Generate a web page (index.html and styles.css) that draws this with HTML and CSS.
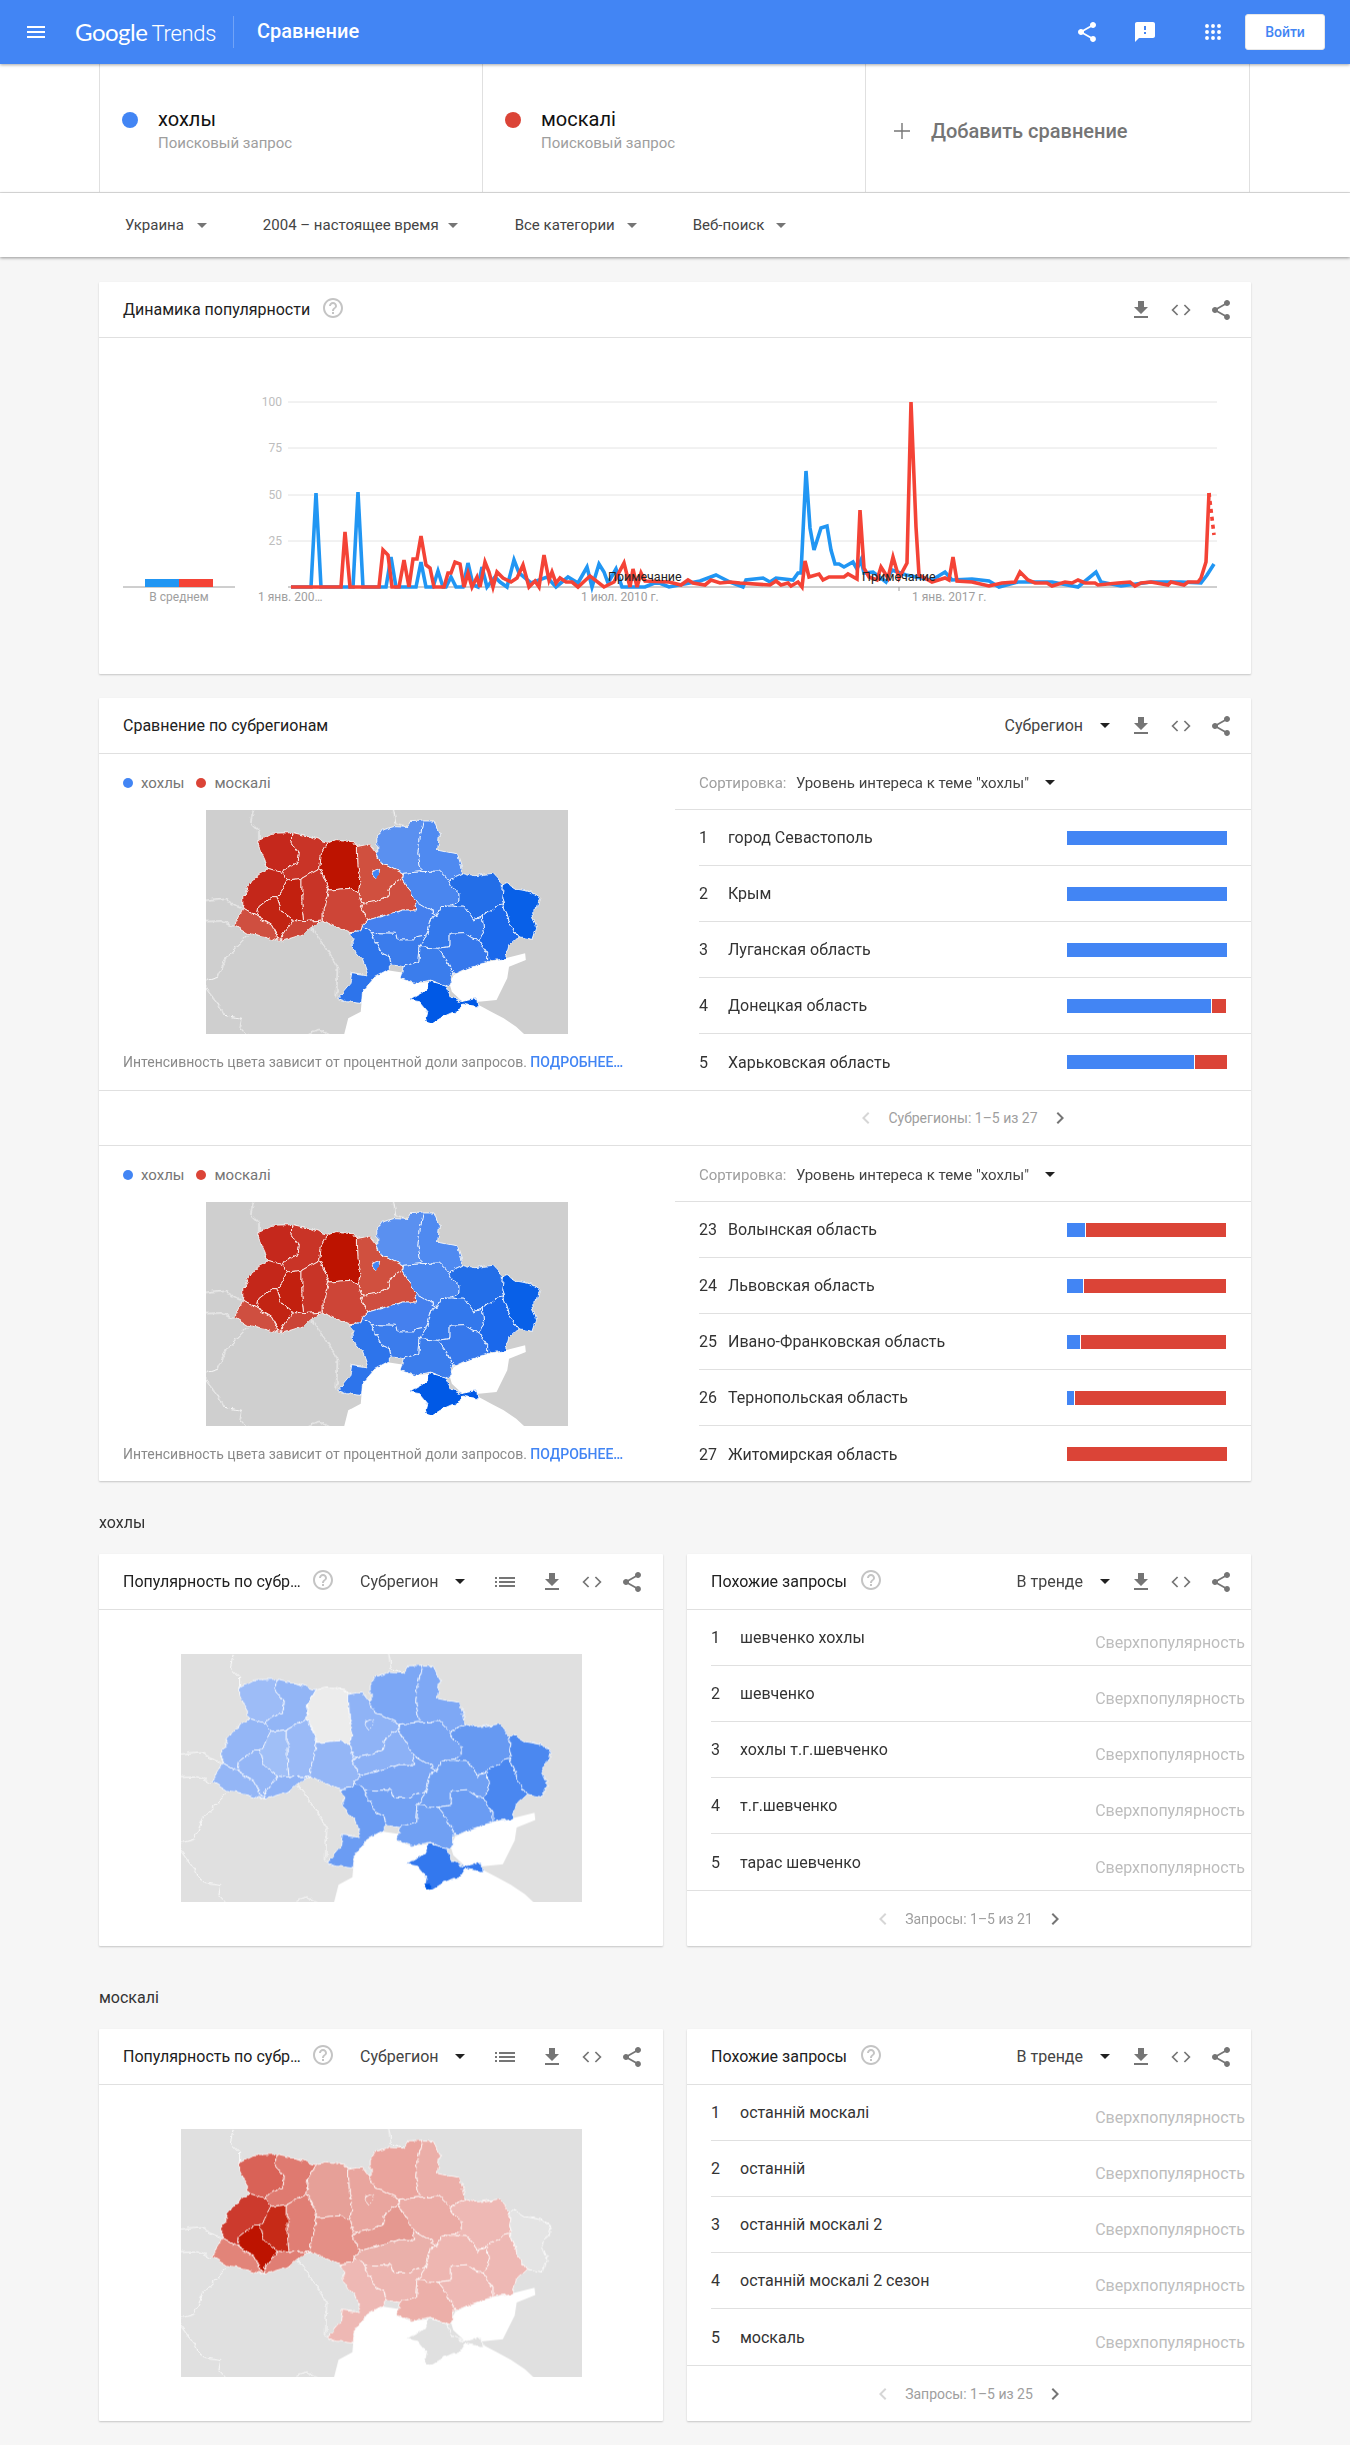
FILE: index.html
```html
<!DOCTYPE html>
<html lang="ru">
<head>
<meta charset="utf-8">
<title>Сравнение - Google Trends</title>
<link rel="stylesheet" href="styles.css">
</head>
<body>
<svg class="defs" xmlns="http://www.w3.org/2000/svg">
  <filter id="wob" x="-5%" y="-5%" width="110%" height="110%" color-interpolation-filters="sRGB">
    <feTurbulence type="fractalNoise" baseFrequency="0.045" numOctaves="3" seed="4" result="n"/>
    <feDisplacementMap in="SourceGraphic" in2="n" scale="16" xChannelSelector="R" yChannelSelector="G"/>
  </filter>
  <symbol id="i-share" viewBox="0 0 24 24"><path d="M18 16.08c-.76 0-1.44.3-1.96.77L8.91 12.7c.05-.23.09-.46.09-.7s-.04-.47-.09-.7l7.05-4.11c.54.5 1.25.81 2.04.81 1.66 0 3-1.34 3-3s-1.34-3-3-3-3 1.34-3 3c0 .24.04.47.09.7L8.04 9.81C7.5 9.31 6.79 9 6 9c-1.66 0-3 1.34-3 3s1.34 3 3 3c.79 0 1.5-.31 2.04-.81l7.12 4.16c-.05.21-.08.43-.08.65 0 1.61 1.31 2.92 2.92 2.92 1.61 0 2.92-1.31 2.92-2.92s-1.31-2.92-2.92-2.92z"/></symbol>
  <symbol id="i-download" viewBox="0 0 24 24"><path d="M19 9h-4V3H9v6H5l7 7 7-7zM5 18v2h14v-2H5z"/></symbol>
  <symbol id="i-code" viewBox="0 0 24 24"><path d="M8.6 7 3.6 12l5 5M15.4 7l5 5-5 5" fill="none" stroke="currentColor" stroke-width="1.7"/></symbol>
  <symbol id="i-list" viewBox="0 0 24 24"><path d="M2 13h2v-2H2v2zm0 4h2v-2H2v2zm0-8h2V7H2v2zm4 4h16v-2H6v2zm0 4h16v-2H6v2zM6 7v2h16V7H6z"/></symbol>
  <symbol id="i-help" viewBox="0 0 24 24"><path d="M11 18h2v-2h-2v2zm1-16C6.48 2 2 6.48 2 12s4.48 10 10 10 10-4.48 10-10S17.52 2 12 2zm0 18c-4.41 0-8-3.59-8-8s3.59-8 8-8 8 3.59 8 8-3.59 8-8 8zm0-14c-2.21 0-4 1.79-4 4h2c0-1.1.9-2 2-2s2 .9 2 2c0 2-3 1.75-3 5h2c0-2.25 3-2.5 3-5 0-2.21-1.79-4-4-4z"/></symbol>
  <symbol id="i-prev" viewBox="0 0 24 24"><path d="M15.41 7.41L14 6l-6 6 6 6 1.41-1.41L10.83 12z"/></symbol>
  <symbol id="i-next" viewBox="0 0 24 24"><path d="M10 6L8.59 7.41 13.17 12l-4.58 4.59L10 18l6-6z"/></symbol>
  <symbol id="ukr" viewBox="297 360 1013 672" preserveAspectRatio="none">
    <g class="borders" filter="url(#wob)">
      <polyline points="432,350 422,395 445,420 445,450"/>
      <polyline points="820,350 828,400 860,410"/>
      <polyline points="590,710 632,775 665,830 662,920"/>
      <polyline points="412,738 355,800 330,862 290,875"/>
      <polyline points="290,632 345,625 395,655"/>
      <polyline points="290,695 340,693 375,710"/>
      <polyline points="290,885 335,950 345,975 395,985 390,1010 415,1040"/>
      <polyline points="565,1040 610,1018 650,1040"/>
    </g>
    <polygon class="sea" points="682,1040 695,985 730,965 735,905 770,860 800,840 860,850 840,865 880,880 925,875 960,900 1000,960 1015,940 1060,945 1095,965 1130,985 1165,1010 1195,1040"/>
    <polygon class="sea" points="978,880 990,855 1030,835 1085,815 1135,805 1190,790 1192,810 1145,830 1140,865 1110,930 1060,935 1015,935 985,905"/>
    <g class="regions" filter="url(#wob)">
      <polygon class="r-volyn" points="445,450 480,430 540,428 538,460 558,490 555,518 515,535 512,548 470,535 462,510 445,470"/>
      <polygon class="r-rivne" points="540,428 590,440 637,458 620,490 615,535 565,565 525,570 512,548 515,535 555,518 558,490 538,460"/>
      <polygon class="r-zhyt" points="637,458 665,452 708,455 718,470 718,490 720,530 730,575 722,610 700,595 640,600 630,570 615,535 620,490"/>
      <polygon class="r-kyiv" points="718,470 755,462 775,490 785,520 805,525 850,550 848,565 812,590 805,620 770,635 735,640 722,610 730,575 720,530 718,490"/>
      <polygon class="r-city" points="760,540 772,543 786,538 784,552 772,565 763,552"/>
      <polygon class="r-cher" points="735,640 770,635 805,620 812,590 848,565 865,595 880,632 885,660 850,660 800,675 750,690 730,655"/>
      <polygon class="r-chern" points="775,445 790,420 825,410 860,412 868,395 905,393 897,440 890,490 900,545 850,550 805,525 785,520 775,490"/>
      <polygon class="r-sumy" points="905,393 935,393 950,435 945,480 1000,492 1012,530 1015,550 975,570 950,543 900,545 890,490 897,440"/>
      <polygon class="r-polt" points="850,550 900,545 950,543 975,570 985,590 1005,610 1005,630 985,648 955,650 945,675 905,648 880,632 865,595 848,565"/>
      <polygon class="r-khar" points="975,570 1015,550 1040,558 1100,550 1130,585 1125,620 1130,645 1105,650 1070,680 1045,690 1020,652 985,648 1005,630 1005,610 985,590"/>
      <polygon class="r-luh" points="1130,585 1140,578 1170,598 1205,605 1232,620 1225,650 1208,665 1222,715 1212,748 1170,740 1148,705 1130,645 1125,620"/>
      <polygon class="r-don" points="1070,680 1105,650 1130,645 1148,705 1170,740 1145,765 1135,805 1085,815 1085,790 1060,750 1075,725"/>
      <polygon class="r-dnip" points="955,650 985,648 1020,652 1045,690 1070,680 1075,725 1060,750 1035,740 1020,728 980,730 980,770 945,775 893,770 915,735 930,680 945,675"/>
      <polygon class="r-zap" points="980,730 1020,728 1035,740 1060,750 1085,790 1085,815 1030,835 990,855 970,810 945,775 980,770"/>
      <polygon class="r-kiro" points="735,705 750,690 800,675 850,660 885,660 880,632 905,648 945,675 930,680 915,735 890,740 880,750 835,750 830,730 760,728"/>
      <polygon class="r-myk" points="760,728 830,730 835,750 880,750 890,740 915,735 893,770 890,815 850,830 815,825 810,800 790,790 770,750"/>
      <polygon class="r-khers" points="893,770 945,775 970,810 990,855 978,880 975,890 925,870 880,880 840,865 850,830 890,815"/>
      <polygon class="r-odes" points="695,728 730,725 735,705 760,728 770,750 790,790 810,800 815,825 805,840 770,860 735,905 732,940 690,935 665,925 700,880 705,848 750,855 735,810 710,780 708,745"/>
      <polygon class="r-crim" points="868,930 900,910 920,890 920,872 965,885 985,925 1010,935 1055,925 1058,950 1015,942 1003,965 985,968 950,985 930,998 912,990 918,965 895,935"/>
      <polygon class="r-seva" points="912,985 925,982 932,998 914,992"/>
      <polygon class="r-khme" points="565,565 615,535 630,570 640,600 625,660 625,690 570,695 565,640"/>
      <polygon class="r-vinn" points="640,600 700,595 722,610 735,640 730,655 750,690 735,705 730,725 695,728 640,700 625,690 625,660"/>
      <polygon class="r-tern" points="525,570 565,565 565,640 570,695 540,688 510,665 495,620 510,600"/>
      <polygon class="r-lviv" points="470,535 512,548 525,570 510,600 495,620 480,620 445,650 440,680 400,655 400,620 430,565"/>
      <polygon class="r-ivan" points="480,620 495,620 510,665 540,688 510,735 505,755 480,705 440,680 445,650"/>
      <polygon class="r-zak" points="400,655 440,680 480,705 505,755 465,740 415,730 378,705"/>
      <polygon class="r-cvts" points="540,688 570,695 625,690 590,710 565,735 505,755 510,735"/>
    </g>
  </symbol>
</svg>

<header class="topbar">
  <svg class="ic-24 menu" viewBox="0 0 24 24"><path d="M3 18h18v-2H3v2zm0-5h18v-2H3v2zm0-7v2h18V6H3z"/></svg>
  <div class="logo"><span class="logo-g">Google</span> <span class="logo-t">Trends</span></div>
  <div class="top-title">Сравнение</div>
  <div class="top-actions">
    <svg class="ic-24"><use href="#i-share"/></svg>
    <svg class="ic-24 feedback" viewBox="0 0 24 24"><path d="M20 2H4c-1.1 0-1.99.9-1.99 2L2 22l4-4h14c1.1 0 2-.9 2-2V4c0-1.1-.9-2-2-2zm-7 12h-2v-2h2v2zm0-4h-2V6h2v4z"/></svg>
    <svg class="ic-24 apps" viewBox="0 0 24 24"><circle cx="4" cy="4" r="2.6"/><circle cx="12" cy="4" r="2.6"/><circle cx="20" cy="4" r="2.6"/><circle cx="4" cy="12" r="2.6"/><circle cx="12" cy="12" r="2.6"/><circle cx="20" cy="12" r="2.6"/><circle cx="4" cy="20" r="2.6"/><circle cx="12" cy="20" r="2.6"/><circle cx="20" cy="20" r="2.6"/></svg>
    <button class="signin">Войти</button>
  </div>
</header>

<section class="terms">
  <div class="term"><span class="dot dot-blue"></span><div><div class="term-name">хохлы</div><div class="term-kind">Поисковый запрос</div></div></div>
  <div class="term"><span class="dot dot-red"></span><div><div class="term-name">москалі</div><div class="term-kind">Поисковый запрос</div></div></div>
  <div class="term term-add"><svg class="plus" viewBox="0 0 16 16"><path d="M8 0v16M0 8h16"/></svg><span>Добавить сравнение</span></div>
</section>

<nav class="filters">
  <div class="filter f1">Украина<i class="caret"></i></div>
  <div class="filter f2">2004 – настоящее время<i class="caret"></i></div>
  <div class="filter f3">Все категории<i class="caret"></i></div>
  <div class="filter f4">Веб-поиск<i class="caret"></i></div>
</nav>

<main class="page">
  <article class="card card-trend">
    <div class="card-head">
      <h2 class="card-title">Динамика популярности</h2>
      <svg class="ic-24 help"><use href="#i-help"/></svg>
      <div class="actions">
        <svg class="ic-24"><use href="#i-download"/></svg><svg class="ic-24"><use href="#i-code"/></svg><svg class="ic-24"><use href="#i-share"/></svg>
      </div>
    </div>
    <svg class="chart" viewBox="99 338 1152 336">
      <g class="grid"><line x1="288" x2="1217" y1="402" y2="402"/><line x1="288" x2="1217" y1="448" y2="448"/><line x1="288" x2="1217" y1="495" y2="495"/><line x1="288" x2="1217" y1="541" y2="541"/></g>
      <line class="axis" x1="288" x2="1217" y1="587" y2="587"/>
      <line class="axis" x1="123" x2="235" y1="587" y2="587"/>
      <line class="axis" x1="899" x2="899" y1="587" y2="591"/>
      <rect class="avg-blue" x="145" y="579" width="34" height="8"/>
      <rect class="avg-red" x="179" y="579" width="34" height="8"/>
      <g class="tick-y"><text x="282" y="406">100</text><text x="282" y="452">75</text><text x="282" y="499">50</text><text x="282" y="545">25</text></g>
      <g class="tick-x"><text x="179" y="601" text-anchor="middle">В среднем</text><text x="258" y="601">1 янв. 200…</text><text x="581" y="601">1 июл. 2010 г.</text><text x="912" y="601">1 янв. 2017 г.</text></g>
      <polyline class="line-blue" points="291,587 311,587 316,493 321,587 353,587 358,492 363,587 386,587 391,557 396,587 416,587 421,562 426,587 433,587 438,571 443,587 446,587 451,577 456,587 463,587 468,563 473,585 478,587 482,567 487,587 495,577 500,582 507,587 514,560 519,573 531,583 547,577 556,587 568,577 578,583 587,567 592,587 599,564 604,572 608,583 616,569 622,587 645,587 657,582 669,587 700,581 716,575 720,577 730,582 743,587 746,580 763,578 770,582 776,578 793,580 798,573 801,573 806,471 810,528 814,550 821,528 827,526 831,550 835,564 839,564 844,567 853,562 857,569 861,560 864,573 873,572 886,582 892,570 906,575 932,580 945,572 952,580 972,579 989,581 999,587 1018,582 1052,582 1078,587 1096,572 1101,582 1121,586 1151,582 1181,582 1201,583 1207,575 1214,564"/>
      <polyline class="line-red" points="291,587 341,587 345,532 350,587 379,587 383,550 388,555 392,587 399,587 404,560 409,587 413,559 417,559 421,536 426,565 430,568 434,587 444,587 448,573 451,573 455,562 460,564 464,587 468,573 472,587 477,577 480,587 485,562 489,572 493,587 497,572 503,578 511,582 517,578 523,565 529,587 535,581 539,587 544,555 549,580 552,572 556,583 560,578 566,582 572,582 578,587 590,576 604,587 614,582 624,563 630,587 633,569 637,587 641,573 645,581 669,582 681,585 688,580 693,583 705,585 711,580 720,583 730,582 740,583 770,585 776,581 781,585 788,583 791,586 798,582 802,587 805,561 809,577 819,574 823,580 829,577 844,577 848,574 857,579 860,510 864,568 869,577 877,580 881,567 888,578 893,557 899,578 907,563 911,402 916,527 919,575 932,582 945,578 949,580 953,557 957,581 972,582 989,586 1002,583 1015,582 1020,572 1028,580 1035,583 1047,583 1052,586 1065,582 1072,583 1078,580 1085,583 1095,583 1098,585 1118,583 1130,582 1135,586 1141,583 1151,582 1168,585 1171,582 1184,585 1188,582 1198,582 1201,578 1206,562 1209,493"/>
      <polyline class="line-red dotted" points="1209,493 1214,535"/>
      <g class="note"><text x="608" y="581">Примечание</text><text x="862" y="581">Примечание</text></g>
    </svg>
  </article>

  <article class="card card-compare">
    <div class="card-head">
      <h2 class="card-title">Сравнение по субрегионам</h2>
      <div class="select sel-region">Субрегион<i class="caret caret-dark"></i></div>
      <div class="actions actions-tight">
        <svg class="ic-24"><use href="#i-download"/></svg><svg class="ic-24"><use href="#i-code"/></svg><svg class="ic-24"><use href="#i-share"/></svg>
      </div>
    </div>
    <div class="split">
      <div class="split-map">
        <div class="legend"><span class="dot-s dot-blue"></span>хохлы<span class="dot-s dot-red second"></span>москалі</div>
        <svg class="map map-small map-dark map-duo"><use href="#ukr"/></svg>
        <p class="caption">Интенсивность цвета зависит от процентной доли запросов. <a class="more">ПОДРОБНЕЕ…</a></p>
      </div>
      <div class="split-list">
        <div class="sort"><span class="sort-k">Сортировка:</span><span class="sort-v">Уровень интереса к теме "хохлы"</span><i class="caret caret-dark"></i></div>
        <div class="row"><span class="num">1</span><span class="name">город Севастополь</span><span class="bar"><b class="blue w-100"></b></span></div>
        <div class="row"><span class="num">2</span><span class="name">Крым</span><span class="bar"><b class="blue w-100"></b></span></div>
        <div class="row"><span class="num">3</span><span class="name">Луганская область</span><span class="bar"><b class="blue w-100"></b></span></div>
        <div class="row"><span class="num">4</span><span class="name">Донецкая область</span><span class="bar"><b class="blue" style="width:144px"></b><b class="red" style="width:14px"></b></span></div>
        <div class="row row-last"><span class="num">5</span><span class="name">Харьковская область</span><span class="bar"><b class="blue" style="width:127px"></b><b class="red" style="width:32px"></b></span></div>
      </div>
    </div>
    <div class="pager pager-line pager-right"><svg class="ic-18 off"><use href="#i-prev"/></svg><span class="pager-text">Субрегионы: 1–5 из 27</span><svg class="ic-18"><use href="#i-next"/></svg></div>
    <div class="split">
      <div class="split-map">
        <div class="legend"><span class="dot-s dot-blue"></span>хохлы<span class="dot-s dot-red second"></span>москалі</div>
        <svg class="map map-small map-dark map-duo"><use href="#ukr"/></svg>
        <p class="caption">Интенсивность цвета зависит от процентной доли запросов. <a class="more">ПОДРОБНЕЕ…</a></p>
      </div>
      <div class="split-list">
        <div class="sort"><span class="sort-k">Сортировка:</span><span class="sort-v">Уровень интереса к теме "хохлы"</span><i class="caret caret-dark"></i></div>
        <div class="row"><span class="num">23</span><span class="name">Волынская область</span><span class="bar"><b class="blue" style="width:18px"></b><b class="red" style="width:140px"></b></span></div>
        <div class="row"><span class="num">24</span><span class="name">Львовская область</span><span class="bar"><b class="blue" style="width:16px"></b><b class="red" style="width:142px"></b></span></div>
        <div class="row"><span class="num">25</span><span class="name">Ивано-Франковская область</span><span class="bar"><b class="blue" style="width:13px"></b><b class="red" style="width:145px"></b></span></div>
        <div class="row"><span class="num">26</span><span class="name">Тернопольская область</span><span class="bar"><b class="blue" style="width:7px"></b><b class="red" style="width:151px"></b></span></div>
        <div class="row row-end"><span class="num">27</span><span class="name">Житомирская область</span><span class="bar"><b class="red w-100"></b></span></div>
      </div>
    </div>
  </article>

  <h3 class="term-title">хохлы</h3>
  <div class="pair">
    <article class="card">
      <div class="card-head">
        <h2 class="card-title short">Популярность по субр…</h2>
        <svg class="ic-24 help help-near"><use href="#i-help"/></svg>
        <div class="select sel-map">Субрегион<i class="caret caret-dark"></i></div>
        <svg class="ic-24 list"><use href="#i-list"/></svg>
        <div class="actions actions-tight">
          <svg class="ic-24"><use href="#i-download"/></svg><svg class="ic-24"><use href="#i-code"/></svg><svg class="ic-24"><use href="#i-share"/></svg>
        </div>
      </div>
      <div class="map-body"><svg class="map map-big map-light map-blue"><use href="#ukr"/></svg></div>
    </article>
    <article class="card">
      <div class="card-head">
        <h2 class="card-title">Похожие запросы</h2>
        <svg class="ic-24 help help-near2"><use href="#i-help"/></svg>
        <div class="select sel-trend">В тренде<i class="caret caret-dark"></i></div>
        <div class="actions actions-tight">
          <svg class="ic-24"><use href="#i-download"/></svg><svg class="ic-24"><use href="#i-code"/></svg><svg class="ic-24"><use href="#i-share"/></svg>
        </div>
      </div>
      <div class="row q"><span class="num">1</span><span class="name">шевченко хохлы</span><span class="hot">Сверхпопулярность</span></div>
      <div class="row q"><span class="num">2</span><span class="name">шевченко</span><span class="hot">Сверхпопулярность</span></div>
      <div class="row q"><span class="num">3</span><span class="name">хохлы т.г.шевченко</span><span class="hot">Сверхпопулярность</span></div>
      <div class="row q"><span class="num">4</span><span class="name">т.г.шевченко</span><span class="hot">Сверхпопулярность</span></div>
      <div class="row q row-last"><span class="num">5</span><span class="name">тарас шевченко</span><span class="hot">Сверхпопулярность</span></div>
      <div class="pager"><svg class="ic-18 off"><use href="#i-prev"/></svg><span class="pager-text">Запросы: 1–5 из 21</span><svg class="ic-18"><use href="#i-next"/></svg></div>
    </article>
  </div>

  <h3 class="term-title term-title-2">москалі</h3>
  <div class="pair">
    <article class="card">
      <div class="card-head">
        <h2 class="card-title short">Популярность по субр…</h2>
        <svg class="ic-24 help help-near"><use href="#i-help"/></svg>
        <div class="select sel-map">Субрегион<i class="caret caret-dark"></i></div>
        <svg class="ic-24 list"><use href="#i-list"/></svg>
        <div class="actions actions-tight">
          <svg class="ic-24"><use href="#i-download"/></svg><svg class="ic-24"><use href="#i-code"/></svg><svg class="ic-24"><use href="#i-share"/></svg>
        </div>
      </div>
      <div class="map-body"><svg class="map map-big map-light map-red"><use href="#ukr"/></svg></div>
    </article>
    <article class="card">
      <div class="card-head">
        <h2 class="card-title">Похожие запросы</h2>
        <svg class="ic-24 help help-near2"><use href="#i-help"/></svg>
        <div class="select sel-trend">В тренде<i class="caret caret-dark"></i></div>
        <div class="actions actions-tight">
          <svg class="ic-24"><use href="#i-download"/></svg><svg class="ic-24"><use href="#i-code"/></svg><svg class="ic-24"><use href="#i-share"/></svg>
        </div>
      </div>
      <div class="row q"><span class="num">1</span><span class="name">останній москалі</span><span class="hot">Сверхпопулярность</span></div>
      <div class="row q"><span class="num">2</span><span class="name">останній</span><span class="hot">Сверхпопулярность</span></div>
      <div class="row q"><span class="num">3</span><span class="name">останній москалі 2</span><span class="hot">Сверхпопулярность</span></div>
      <div class="row q"><span class="num">4</span><span class="name">останній москалі 2 сезон</span><span class="hot">Сверхпопулярность</span></div>
      <div class="row q row-last"><span class="num">5</span><span class="name">москаль</span><span class="hot">Сверхпопулярность</span></div>
      <div class="pager"><svg class="ic-18 off"><use href="#i-prev"/></svg><span class="pager-text">Запросы: 1–5 из 25</span><svg class="ic-18"><use href="#i-next"/></svg></div>
    </article>
  </div>
</main>
</body>
</html>
```

FILE: styles.css
```css
* { box-sizing: border-box; }
html, body { margin: 0; padding: 0; }
body { background: #f6f6f6; font-family: Roboto, "Noto Sans", sans-serif; color: #333; height: 2445px; overflow: hidden; }
.defs { position: absolute; width: 0; height: 0; overflow: hidden; }
h2, h3, p { margin: 0; font-weight: 400; }

.ic-24 { width: 24px; height: 24px; fill: #757575; color: #757575; flex: none; display: block; }
.ic-18 { width: 24px; height: 24px; fill: #757575; flex: none; }
.ic-18.off { fill: #d6d6d6; }

/* top bar */
.topbar { height: 64px; background: #4285f4; display: flex; align-items: center; position: relative; z-index: 2; box-shadow: 0 1px 3px rgba(0,0,0,.35); color: #fff; padding-left: 24px; }
.topbar .ic-24 { fill: #fff; color: #fff; }
.logo { margin-left: 27px; width: 159px; height: 32px; line-height: 32px; border-right: 1px solid rgba(255,255,255,.25); white-space: nowrap; font-family: Lato, sans-serif; font-size: 24px; }
.logo-g { font-weight: 400; letter-spacing: -.5px; }
.logo-t { font-family: Roboto, sans-serif; font-weight: 300; font-size: 22px; letter-spacing: -.3px; margin-left: -2px; }
.top-title { margin-left: 23px; margin-top: -2px; font-size: 20px; font-weight: 500; }
.top-actions { margin-left: auto; display: flex; align-items: center; padding-right: 25px; }
.feedback { margin-left: 34px; }
.topbar .apps { margin-left: 47px; width: 18px; height: 18px; }
.signin { margin-left: 23px; width: 80px; height: 36px; background: #fff; color: #4285f4; border: 1px solid #e8e8e8; border-radius: 3px; font: 500 14px Roboto, sans-serif; }

/* terms */
.terms { height: 129px; background: #fff; display: flex; padding-left: 99px; border-bottom: 1px solid #e0e0e0; }
.term { width: 383px; border-left: 1px solid #e0e0e0; display: flex; align-items: center; padding-left: 22px; padding-top: 3px; }
.term-add { border-right: 1px solid #e0e0e0; width: 385px; padding-left: 28px; padding-top: 6px; font-size: 20px; font-weight: 500; color: #757575; }
.plus { width: 16px; height: 16px; fill: none; stroke: #757575; stroke-width: 1.4; margin-right: 21px; }
.dot { width: 16px; height: 16px; border-radius: 50%; margin-right: 20px; margin-top: -20px; flex: none; }
.dot-blue { background: #4285f4; }
.dot-red { background: #db4437; }
.term-name { font-size: 20px; line-height: 24px; color: #111; }
.term-kind { font-size: 15px; line-height: 20px; color: #9e9e9e; margin-top: 2px; }

/* filters */
.filters { height: 64px; background: #fff; display: flex; align-items: center; box-shadow: 0 1px 3px rgba(0,0,0,.4); position: relative; font-size: 15px; color: #444; }
.filter { display: flex; align-items: center; white-space: nowrap; }
.f1 { margin-left: 125px; }
.f1 .caret { margin-left: 13px; }
.f2 { margin-left: 56px; }
.f2 .caret { margin-left: 9px; }
.f3 { margin-left: 57px; }
.f4 { margin-left: 56px; }
.caret { display: block; width: 0; height: 0; border-left: 5px solid transparent; border-right: 5px solid transparent; border-top: 5px solid #757575; margin-left: 12px; }
.caret-dark { border-top-color: #212121; }

/* page + cards */
.page { width: 1152px; margin-left: 99px; padding-top: 25px; }
.card { background: #fff; box-shadow: 0 1px 2px rgba(0,0,0,.2); border-radius: 1px; }
.card-trend { height: 392px; margin-bottom: 24px; }
.card-head { height: 56px; border-bottom: 1px solid #e0e0e0; display: flex; align-items: center; padding-left: 24px; padding-right: 18px; }
.card-title { font-size: 16px; color: #212121; white-space: nowrap; }
.help { width: 24px; height: 24px; fill: #c4c4c4; margin-left: 11px; margin-top: -3px; }
.actions { margin-left: auto; display: flex; gap: 16px; align-items: center; }
.actions-tight { margin-left: 0; }
.select { font-size: 16px; color: #444; display: flex; align-items: center; margin-left: auto; margin-right: 19px; white-space: nowrap; }
.select .caret { margin-left: 17px; }
.chart { width: 1152px; height: 336px; display: block; }
.grid line { stroke: #e4e4e4; stroke-width: 1; }
.axis { stroke: #9e9e9e; stroke-width: 1; }
.avg-blue { fill: #2196f3; }
.avg-red { fill: #f44336; }
.tick-y text { font-size: 12px; fill: #bdbdbd; text-anchor: end; }
.tick-x text { font-size: 12px; fill: #9e9e9e; }
.line-blue, .line-red { fill: none; stroke-width: 3.6; stroke-linejoin: miter; }
.line-blue { stroke: #2196f3; }
.line-red { stroke: #f44336; }
.dotted { stroke-dasharray: 4 4; }
.note text { font-size: 12.5px; fill: #222; }

/* compare */
.card-compare { height: 783px; }
.split { display: grid; grid-template-columns: 576px 576px; }
.split-map { display: flex; flex-direction: column; padding-left: 24px; }
.legend { height: 56px; padding-top: 2px; display: flex; align-items: center; font-size: 15px; color: #757575; }
.dot-s { width: 10px; height: 10px; border-radius: 50%; margin-right: 8px; }
.second { margin-left: 12px; }
.map { display: block; }
.map-small { width: 362px; height: 224px; margin-left: 83px; }
.caption { height: 56px; line-height: 56px; font-size: 14px; color: #8a8a8a; white-space: nowrap; }
.more { color: #4285f4; font-weight: 500; }
.sort { height: 56px; padding-top: 2px; border-bottom: 1px solid #e0e0e0; padding-left: 24px; display: flex; align-items: center; font-size: 15px; }
.sort-k { color: #9e9e9e; width: 97px; }
.sort-v { color: #444; }
.sort .caret { margin-left: 16px; }
.row { height: 56px; border-bottom: 1px solid #e0e0e0; margin-left: 24px; display: flex; align-items: center; font-size: 16px; color: #333; }
.row-last { border-bottom: 0; }
.row-end { border-bottom: 0; }
.num { width: 29px; flex: none; }
.name { flex: 1; white-space: nowrap; }
.bar { width: 160px; height: 14px; margin-right: 24px; display: flex; gap: 1px; flex: none; }
.bar b { display: block; height: 14px; }
.bar .blue { background: #4285f4; }
.bar .red { background: #db4437; }
.w-100 { width: 160px; }
.pager { height: 56px; border-top: 1px solid #e0e0e0; display: flex; align-items: center; justify-content: center; font-size: 14px; color: #9e9e9e; }
.pager-line { border-bottom: 1px solid #e0e0e0; }
.pager-right { padding-left: 576px; }
.pager-text { margin: 0 10px; }

/* sections */
.term-title { font-size: 16px; line-height: 20px; padding-top: 32px; height: 73px; color: #333; }
.term-title-2 { margin-top: 10px; }
.pair { display: grid; grid-template-columns: 564px 564px; gap: 24px; }
.pair .card { height: 392px; }
.short { width: 190px; }
.help-near { margin-left: -2px; }
.help-near2 { margin-left: 12px; }
.sel-map { margin-left: 25px; margin-right: 0; }
.list { margin-left: 28px; margin-right: 23px; }
.sel-trend { margin-left: auto; }
.map-body { height: 336px; display: flex; align-items: center; justify-content: center; }
.map-big { width: 401px; height: 248px; }
.hot { color: #bdbdbd; font-size: 16px; padding-right: 6px; padding-top: 10px; }

/* map paint */
.sea { fill: #fff; }
.borders polyline { fill: none; stroke: #fff; stroke-width: 1; vector-effect: non-scaling-stroke; opacity: .85; }
.regions polygon { stroke: #fff; stroke-width: .8; vector-effect: non-scaling-stroke; stroke-linejoin: round; }
.map-dark { background: #cfcfcf; }
.map-light { background: #e0e0e0; }
.r-volyn { fill: var(--volyn); } .r-rivne { fill: var(--rivne); } .r-zhyt { fill: var(--zhyt); } .r-kyiv { fill: var(--kyiv); }
.r-city { fill: var(--city); } .r-cher { fill: var(--cher); } .r-chern { fill: var(--chern); } .r-sumy { fill: var(--sumy); }
.r-polt { fill: var(--polt); } .r-khar { fill: var(--khar); } .r-luh { fill: var(--luh); } .r-don { fill: var(--don); }
.r-dnip { fill: var(--dnip); } .r-zap { fill: var(--zap); } .r-kiro { fill: var(--kiro); } .r-myk { fill: var(--myk); }
.r-khers { fill: var(--khers); } .r-odes { fill: var(--odes); } .r-crim { fill: var(--crim); } .regions .r-seva { fill: var(--seva); stroke: none; }
.r-khme { fill: var(--khme); } .r-vinn { fill: var(--vinn); } .r-tern { fill: var(--tern); } .r-lviv { fill: var(--lviv); }
.r-ivan { fill: var(--ivan); } .r-zak { fill: var(--zak); } .r-cvts { fill: var(--cvts); }
.map-duo { --volyn:#c5281c; --rivne:#c93427; --zhyt:#bd1300; --kyiv:#d0503f; --city:#4285f4; --cher:#cf4e40; --chern:#5a90f0; --sumy:#4f8af1; --polt:#4a86ef; --khar:#236ee8; --luh:#0860e8; --don:#1a68eb; --dnip:#3378ec; --zap:#3678ec; --kiro:#4580ee; --myk:#3b7cec; --khers:#3b7dec; --odes:#2d74eb; --crim:#0059e6; --seva:#0059e6; --khme:#c83427; --vinn:#cd4537; --tern:#c2200f; --lviv:#c4271a; --ivan:#c22413; --zak:#cf4f40; --cvts:#cb4436; }
.map-blue { --volyn:#9dbcf7; --rivne:#92b5f6; --zhyt:#ececec; --kyiv:#8fb3f6; --city:#8fb3f6; --cher:#8cb1f6; --chern:#7ca7f5; --sumy:#7ea8f5; --polt:#78a4f4; --khar:#6699f2; --luh:#4b88f0; --don:#4a87f0; --dnip:#70a0f3; --zap:#6a9cf3; --kiro:#7aa5f4; --myk:#72a1f4; --khers:#70a0f3; --odes:#6b9cf3; --crim:#3378ee; --seva:#0059e6; --khme:#9abaf7; --vinn:#94b6f6; --tern:#a0bff7; --lviv:#94b6f6; --ivan:#94b6f6; --zak:#94b6f6; --cvts:#8eb2f6; }
.map-red { --volyn:#d96257; --rivne:#df7a70; --zhyt:#e6a098; --kyiv:#e9a59e; --city:#e9a59e; --cher:#e59890; --chern:#eaa49d; --sumy:#ebaea8; --polt:#ebaba5; --khar:#eeb8b4; --luh:#e4e4e4; --don:#eeb8b4; --dnip:#eeb6b1; --zap:#eeb8b4; --kiro:#eab0aa; --myk:#edb5b0; --khers:#ecafa9; --odes:#eeb8b4; --crim:#e0e0e0; --seva:#e0e0e0; --khme:#e07e74; --vinn:#e48f86; --tern:#c62a17; --lviv:#cc3a2d; --ivan:#bd1300; --zak:#e28479; --cvts:#e07e74; }
```
